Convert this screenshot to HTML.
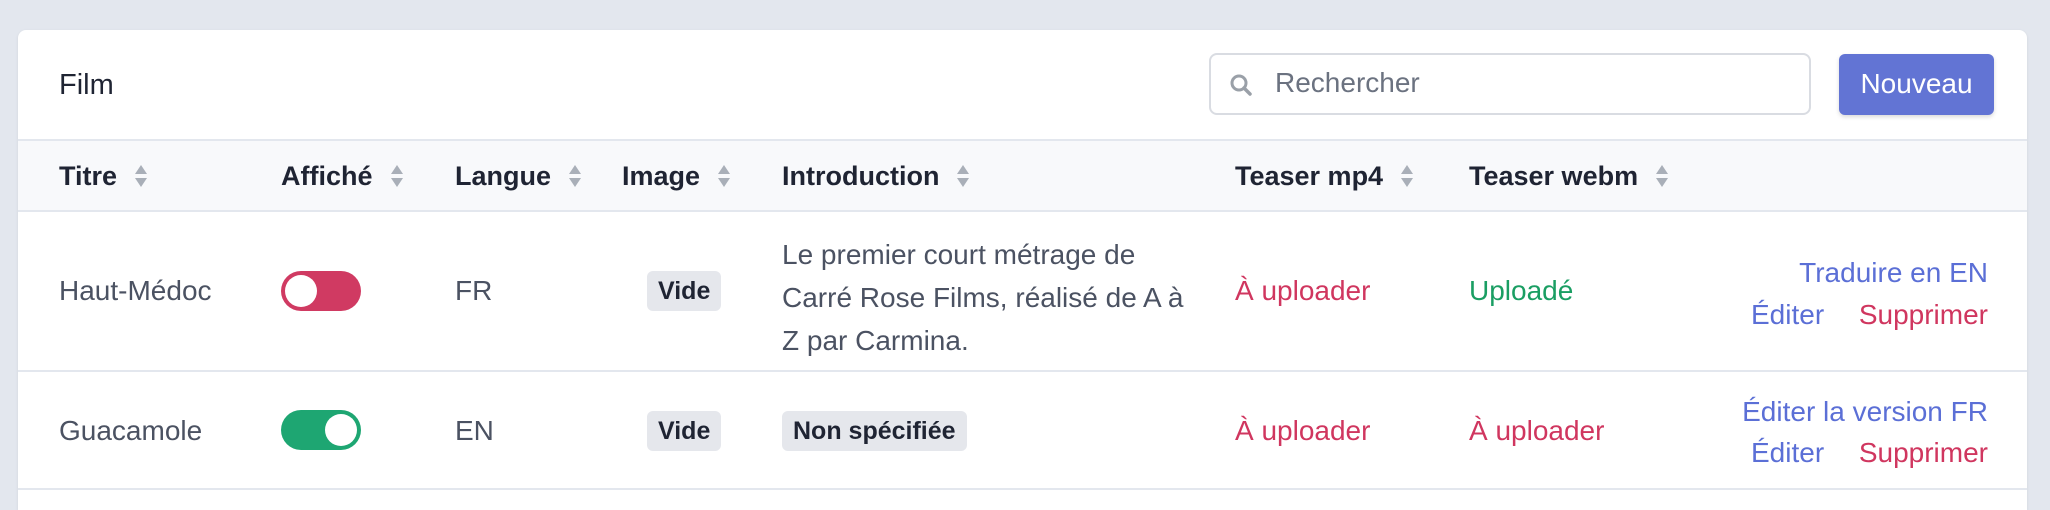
<!DOCTYPE html>
<html style="overflow:hidden;height:510px"><head><meta charset="utf-8"><style>
*{box-sizing:border-box;margin:0;padding:0}
body{width:2050px;height:510px;background:#e3e7ee;font-family:"Liberation Sans",sans-serif;position:relative;overflow:hidden;color:#4b5262}
.card{position:absolute;left:18px;top:30px;width:2009px;height:480px;background:#fff;border-radius:8px 8px 0 0;box-shadow:0 1px 3px rgba(0,0,0,.08)}
.a{position:absolute;white-space:nowrap;font-size:28px;line-height:30px}
.hdr{position:absolute;left:18px;top:139px;width:2009px;height:73px;background:#f8f9fb;border-top:2px solid #e3e7ee;border-bottom:2px solid #e3e7ee}
.line{position:absolute;left:18px;width:2009px;height:2px;background:#e3e7ee}
.h{font-weight:bold;color:#1f2433;font-size:27px}
.sort{display:inline-block;vertical-align:middle;margin-left:16px;width:16px;height:24px;position:relative;top:-2px}
.tog{position:absolute;width:80px;height:40px;border-radius:20px}
.tog i{position:absolute;top:4px;width:32px;height:32px;border-radius:50%;background:#fff}
.badge{position:absolute;background:#e5e7ec;border-radius:6px;font-size:25px;font-weight:bold;color:#1f2433;height:40px;line-height:40px;padding:0 11px}
.red{color:#d0365f}.green{color:#1a9e63}.blue{color:#5b6fd6}
</style></head><body>
<div class="card"></div>
<div class="a" style="left:59px;top:70px;font-size:29px;color:#1f2433">Film</div>
<div style="position:absolute;left:1209px;top:53px;width:602px;height:62px;border:2px solid #d9dce2;border-radius:8px;background:#fff"></div>
<svg style="position:absolute;left:1229px;top:73px" width="24" height="24" viewBox="0 0 24 24"><circle cx="10" cy="10" r="7" fill="none" stroke="#9aa0a8" stroke-width="3"/><path d="M15 15l6 6" stroke="#9aa0a8" stroke-width="3.5" stroke-linecap="round"/></svg>
<div class="a" style="left:1275px;top:68px;color:#6b7280;font-size:28px">Rechercher</div>
<div style="position:absolute;left:1839px;top:54px;width:155px;height:61px;background:#6274d4;border-radius:6px;box-shadow:0 2px 4px rgba(0,0,0,.15)"></div>
<div class="a" style="left:1839px;width:155px;text-align:center;top:69px;color:#fff;font-size:28px">Nouveau</div>
<div class="hdr"></div>
<div class="line" style="top:370px"></div>
<div class="line" style="top:488px"></div>
<svg width="0" height="0" style="position:absolute"><defs><g id="s"><path d="M8 1L14 10H2z M8 23L14 14H2z" fill="#a9afb8"/></g></defs></svg>
<div class="a h" style="left:59px;top:161px">Titre<svg class="sort"><use href="#s"/></svg></div>
<div class="a h" style="left:281px;top:161px">Affiché<svg class="sort"><use href="#s"/></svg></div>
<div class="a h" style="left:455px;top:161px">Langue<svg class="sort"><use href="#s"/></svg></div>
<div class="a h" style="left:622px;top:161px">Image<svg class="sort"><use href="#s"/></svg></div>
<div class="a h" style="left:782px;top:161px">Introduction<svg class="sort"><use href="#s"/></svg></div>
<div class="a h" style="left:1235px;top:161px">Teaser mp4<svg class="sort"><use href="#s"/></svg></div>
<div class="a h" style="left:1469px;top:161px">Teaser webm<svg class="sort"><use href="#s"/></svg></div>

<div class="a" style="left:59px;top:276px">Haut-Médoc</div>
<div class="tog" style="left:281px;top:271px;background:#d03a62"><i style="left:4px"></i></div>
<div class="a" style="left:455px;top:276px">FR</div>
<div class="badge" style="left:647px;top:271px">Vide</div>
<div class="a" style="left:782px;top:233px;line-height:43px">Le premier court métrage de<br>Carré Rose Films, réalisé de A à<br>Z par Carmina.</div>
<div class="a red" style="left:1235px;top:276px">À uploader</div>
<div class="a green" style="left:1469px;top:276px">Uploadé</div>
<div class="a blue" style="right:62px;top:258px">Traduire en EN</div>
<div class="a blue" style="left:1751px;top:300px">Éditer</div>
<div class="a red" style="right:62px;top:300px">Supprimer</div>

<div class="a" style="left:59px;top:416px">Guacamole</div>
<div class="tog" style="left:281px;top:410px;background:#1ea672"><i style="left:44px"></i></div>
<div class="a" style="left:455px;top:416px">EN</div>
<div class="badge" style="left:647px;top:411px">Vide</div>
<div class="badge" style="left:782px;top:411px">Non spécifiée</div>
<div class="a red" style="left:1235px;top:416px">À uploader</div>
<div class="a red" style="left:1469px;top:416px">À uploader</div>
<div class="a blue" style="right:62px;top:397px">Éditer la version FR</div>
<div class="a blue" style="left:1751px;top:438px">Éditer</div>
<div class="a red" style="right:62px;top:438px">Supprimer</div>
</body></html>
